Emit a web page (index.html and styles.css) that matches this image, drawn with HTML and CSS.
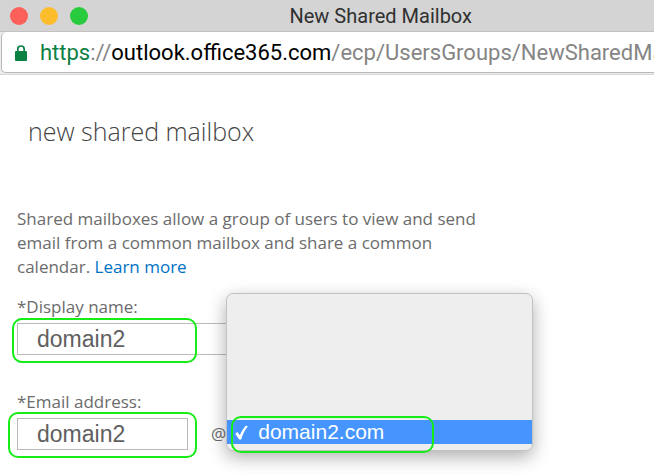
FILE: index.html
```html
<!DOCTYPE html>
<html lang="en">
<head>
<meta charset="utf-8">
<title>New Shared Mailbox</title>
<link rel="stylesheet" href="styles.css">
</head>
<body>
<header class="titlebar">
  <div class="lights">
    <button class="light close" type="button" aria-label="Close"></button>
    <button class="light minimize" type="button" aria-label="Minimize"></button>
    <button class="light expand" type="button" aria-label="Zoom"></button>
  </div>
  <span class="window-title">New Shared Mailbox</span>
</header>
<div class="toolbar">
  <div class="address">
    <svg class="lock" viewBox="0 0 12 16" aria-hidden="true">
      <path d="M2.8 8V4.2a3.2 3.2 0 0 1 6.4 0V8" fill="none" stroke="#0b8043" stroke-width="1.7"/>
      <rect x="0" y="6" width="12" height="10" rx="1" fill="#0b8043"/>
    </svg>
    <span class="url"><span class="scheme">https</span>://<span class="host">outlook.office365.com</span>/ecp/UsersGroups/NewSharedMa</span>
  </div>
</div>
<main class="page">
  <h1>new shared mailbox</h1>
  <p class="intro">Shared mailboxes allow a group of users to view and send email from a common mailbox and share a common calendar. <a href="#">Learn more</a></p>
  <form>
    <div class="field">
      <label for="display-name">*Display name:</label>
      <div class="row">
        <div class="display-box"><input id="display-name" type="text" value="domain2"></div>
      </div>
    </div>
    <div class="field">
      <label for="email">*Email address:</label>
      <div class="row">
        <div class="email-box"><input id="email" type="text" value="domain2"></div>
        <span class="at">@</span>
        <div class="domain">
          <div class="menu" role="listbox" aria-label="Domain">
            <button class="option" type="button" role="option" aria-selected="true">
              <svg class="check" viewBox="0 0 13 15" aria-hidden="true"><path d="M0.3 8.8 2.4 7 4.9 10.2C6.4 6.4 8.4 3 11.2 0.4L12.8 1.4C9.8 5 7.6 9.4 6.2 14.4H4.2Z" fill="#fff"/></svg>
              <span>domain2.com</span>
            </button>
          </div>
        </div>
      </div>
    </div>
  </form>
</main>
</body>
</html>
```
FILE: styles.css
```css
*,
*::after {
  box-sizing: border-box;
}

body {
  margin: 0;
  min-height: 100vh;
  overflow: hidden;
  background: #fff;
  color: #6b6b6b;
  font: 17px/24px "Open Sans", "Noto Sans", sans-serif;
}

.titlebar {
  display: flex;
  align-items: center;
  height: 32px;
  padding: 0 10px;
  background: #d4d4d4;
  border-bottom: 1px solid #c2c2c2;
}

.lights {
  display: flex;
  flex: 1;
  gap: 12px;
}

.light {
  width: 18px;
  height: 18px;
  padding: 0;
  border: 0;
  border-radius: 50%;
}

.close { background: #fc605b; }
.minimize { background: #fdbc2c; }
.expand { background: #27cb3d; }

.window-title {
  flex: 0 0 auto;
  margin-right: 172px;
  color: #303030;
  font: 20px/32px Roboto, sans-serif;
}

.toolbar {
  padding: 0 0 1px 1px;
  background: #ececec;
  border-bottom: 1px solid #d8d8d8;
}

.address {
  display: flex;
  align-items: center;
  gap: 13px;
  height: 41px;
  padding: 2px 0 0 13px;
  background: #fff;
  border: 1px solid #b8b8b8;
  border-width: 0 0 1px 1px;
  border-radius: 5px 0 0 5px;
  overflow: hidden;
}

.lock {
  flex: none;
  width: 12px;
  height: 16px;
}

.url {
  color: #858585;
  font: 22px/32px Roboto, sans-serif;
  white-space: nowrap;
}

.scheme { color: #0b8043; }
.host { color: #000; }

.page {
  padding: 40px 17px 0;
}

h1 {
  margin: 0 0 60px 11px;
  color: #444;
  font-size: 25px;
  font-weight: 300;
  line-height: 32px;
}

.intro {
  max-width: 480px;
  margin: 0 0 16px;
}

a {
  color: #0072c6;
  text-decoration: none;
}

.field {
  margin-bottom: 35px;
}

label {
  display: block;
  margin-bottom: 4px;
}

.row {
  display: flex;
  align-items: center;
}

.display-box,
.email-box,
.domain {
  position: relative;
}

.display-box { width: 340px; }
.email-box { width: 171px; }

.display-box::after,
.email-box::after,
.menu::after {
  content: "";
  position: absolute;
  border: 2px solid #16ec16;
  border-radius: 10px;
  pointer-events: none;
}

.display-box::after {
  inset: -5px auto -8px -5px;
  width: 185px;
}

.email-box::after {
  inset: -6px -9px -8px -9px;
}

input {
  display: block;
  width: 100%;
  height: 32px;
  padding: 0 19px;
  border: 1px solid #bababa;
  background: #fff;
  color: #606060;
  font: 23px "Liberation Sans", Arial, sans-serif;
}

.at {
  margin-left: 23px;
}

.domain {
  align-self: stretch;
}

.menu {
  position: absolute;
  bottom: -1px;
  left: 0;
  width: 307px;
  height: 158px;
  padding-bottom: 6px;
  display: flex;
  align-items: flex-end;
  background: #eee;
  border: 1px solid #c2c2c2;
  border-radius: 7px;
  box-shadow: 0 6px 18px rgba(0, 0, 0, 0.32);
}

.menu::after {
  left: 4px;
  bottom: -3px;
  width: 203px;
  height: 37px;
}

.option {
  display: flex;
  align-items: center;
  gap: 10px;
  width: 100%;
  height: 24px;
  padding: 0 8px;
  border: 0;
  background: #4695fe;
  color: #fff;
  font: 21px/24px "Liberation Sans", Arial, sans-serif;
}

.check {
  width: 13px;
  height: 15px;
}
```
